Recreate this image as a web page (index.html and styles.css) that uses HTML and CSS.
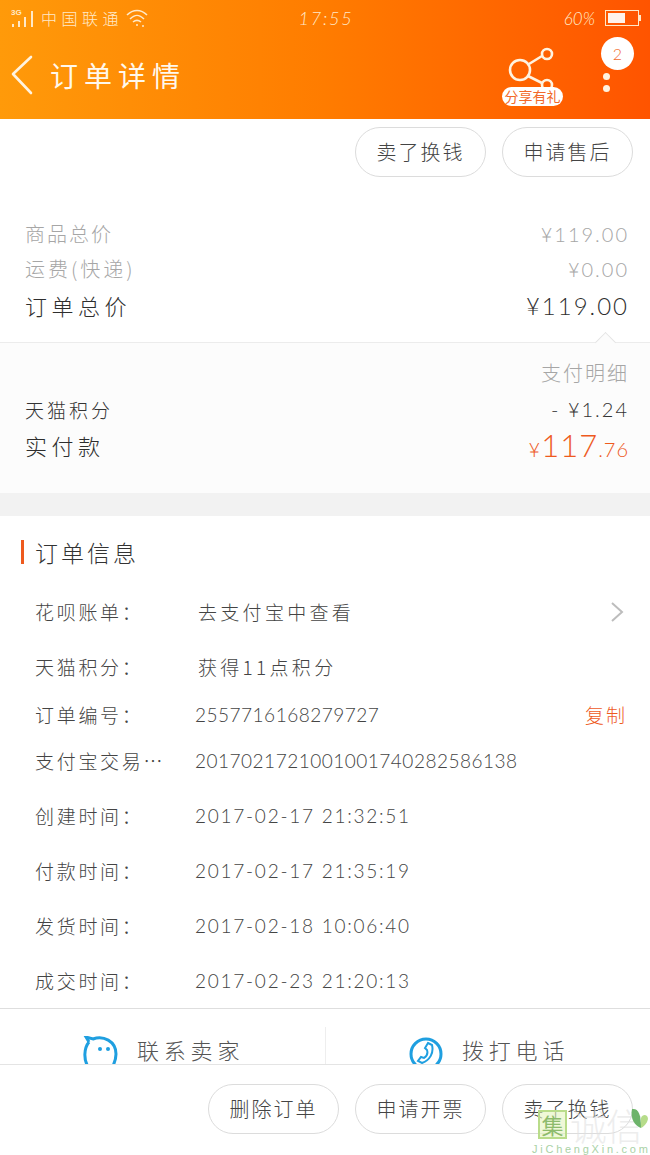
FILE: index.html
```html
<!DOCTYPE html>
<html lang="zh-CN">
<head>
    <meta charset="UTF-8">
    <meta name="viewport" content="width=device-width, initial-scale=1.0">
    <title>订单详情</title>
    <link rel="stylesheet" href="styles.css">
</head>
<body>
<div class="page">
    <!-- top orange area -->
    <header class="top">
        <div class="status">
            <div class="status-left">
                <svg class="signal" width="24" height="20" viewBox="0 0 24 20">
                    <text x="0" y="7" class="net">3G</text>
                    <rect x="1" y="16" width="2" height="3" fill="#ffe9c8"/>
                    <rect x="7" y="13" width="2" height="6" fill="#ffe9c8"/>
                    <rect x="13" y="9" width="2" height="10" fill="#ffe9c8"/>
                    <rect x="20" y="3" width="2" height="16" fill="#ffe9c8"/>
                </svg>
                <span class="carrier">中国联通</span>
                <svg width="24" height="20" viewBox="0 0 24 20" fill="none" stroke="#ffe9c8" stroke-width="1.6">
                    <path d="M2 7 C8 1 16 1 22 7"/>
                    <path d="M5 11 C10 6 14 6 19 11"/>
                    <path d="M8 14 C11 11.5 13 11.5 16 14"/>
                    <circle cx="12" cy="17" r="1" fill="#ffe9c8" stroke="none"/>
                    <circle cx="18" cy="18" r="1" fill="#ffe9c8" stroke="none"/>
                </svg>
            </div>
            <span class="time">17:55</span>
            <div class="status-right">
                <span class="percent">60%</span>
                <div class="battery"><div class="battery-fill" style="width:60%"></div></div>
                <div class="battery-tip"></div>
            </div>
        </div>
        <div class="titlebar">
            <svg class="back" width="24" height="40" viewBox="0 0 24 40" fill="none" stroke="#fff3e0" stroke-width="2.6" stroke-linecap="round" stroke-linejoin="round">
                <path d="M21 2 L3 19 L21 38"/>
            </svg>
            <h1 class="title">订单详情</h1>
            <div class="share">
                <svg width="54" height="48" viewBox="0 0 54 48" fill="none" stroke="#fff3e0" stroke-width="2.6">
                    <circle cx="19" cy="24" r="10"/>
                    <circle cx="46" cy="8" r="5"/>
                    <circle cx="46" cy="39" r="5"/>
                    <path d="M28 18 L41 10"/>
                    <path d="M27 30 L41 37"/>
                </svg>
                <span class="share-tag">分享有礼</span>
            </div>
            <div class="more">
                <span class="badge">2</span>
                <span class="dot"></span>
                <span class="dot"></span>
            </div>
        </div>
    </header>

    <main class="content">
        <div class="actions">
            <a class="pill">卖了换钱</a>
            <a class="pill">申请售后</a>
        </div>

        <!-- prices -->
        <section class="prices">
            <div class="row row-muted"><span>商品总价</span><span class="num">¥119.00</span></div>
            <div class="row row-muted row-wide"><span>运费(快递)</span><span class="num">¥0.00</span></div>
            <div class="row row-total"><span>订单总价</span><span class="num">¥119.00</span></div>
        </section>

        <section class="pay">
            <span class="arrow"></span>
            <div class="pay-detail">支付明细</div>
            <div class="row row-small"><span>天猫积分</span><span class="num">- ¥1.24</span></div>
            <div class="row row-total"><span>实付款</span><span class="num paid">¥<b>117</b>.<small>76</small></span></div>
        </section>

        <div class="band"></div>

        <!-- order info -->
        <section class="info">
            <h2 class="info-title">订单信息</h2>
            <div class="info-row h-first"><span class="label">花呗账单：</span><span class="value value-cn">去支付宝中查看</span>
                <svg class="chevron" width="14" height="22" viewBox="0 0 14 22" fill="none" stroke="#bdbdbd" stroke-width="2"><path d="M2 2 L12 11 L2 20"/></svg>
            </div>
            <div class="info-row h-55"><span class="label">天猫积分：</span><span class="value value-cn">获得11点积分</span></div>
            <div class="info-row h-47"><span class="label">订单编号：</span><span class="value value-code">2557716168279727</span><a class="copy">复制</a></div>
            <div class="info-row h-46"><span class="label">支付宝交易…</span><span class="value value-code">2017021721001001740282586138</span></div>
            <div class="info-row h-55"><span class="label">创建时间：</span><span class="value value-date">2017-02-17 21:32:51</span></div>
            <div class="info-row h-55"><span class="label">付款时间：</span><span class="value value-date">2017-02-17 21:35:19</span></div>
            <div class="info-row h-55"><span class="label">发货时间：</span><span class="value value-date">2017-02-18 10:06:40</span></div>
            <div class="info-row h-55"><span class="label">成交时间：</span><span class="value value-date">2017-02-23 21:20:13</span></div>
        </section>

        <div class="contact">
            <div class="contact-item">
                <svg width="36" height="36" viewBox="0 0 36 36" fill="none" stroke="#1f9fe0" stroke-width="3">
                    <path d="M6 6 L3 1 L10 3 C20 -1 33 5 33 18 C33 24 31 28 29 32"/>
                    <path d="M6 6 C1 12 0 24 6 32"/>
                    <circle cx="17" cy="13" r="2" fill="#1f9fe0" stroke="none"/>
                    <circle cx="25" cy="13" r="2" fill="#1f9fe0" stroke="none"/>
                </svg>
                <span>联系卖家</span>
            </div>
            <div class="contact-item contact-phone">
                <svg width="36" height="36" viewBox="0 0 36 36" fill="none" stroke="#1f9fe0" stroke-width="3">
                    <circle cx="17" cy="18" r="15"/>
                    <path d="M19 7 L23 9 C25 17 21 24 13 27 L9 25 L12 21 L15 22 C18 20 19 17 18 14 L16 12 Z" stroke-width="2"/>
                </svg>
                <span>拨打电话</span>
            </div>
        </div>
    </main>

    <footer class="bottom">
        <a class="pill">删除订单</a>
        <a class="pill">申请开票</a>
        <a class="pill">卖了换钱</a>
    </footer>

    <!-- site watermark over the footer -->
    <div class="watermark">
        <div class="wm-top">
            <span class="wm-box">集</span>
            <span class="wm-name">诚信</span>
            <svg class="wm-leaf" width="20" height="24" viewBox="0 0 20 24"><path d="M3 2 C9 1 12 6 12 21 C6 19 1 12 3 2 Z" fill="#6db36a"/><path d="M12 11 C14 6 19 8 19 12 C18 17 14 20 12 21 Z" fill="#b6dc8a"/></svg>
        </div>
        <div class="wm-url">JiChengXin.com</div>
    </div>
</div>
</body>
</html>
```

FILE: styles.css
```css
* {
    box-sizing: border-box;
}

html, body {
    margin: 0;
    padding: 0;
    overflow: hidden;
}

body {
    font-family: "Noto Sans CJK SC", "Lato", sans-serif;
    font-weight: 300;
    color: #333;
    background: #fff;
}

.page {
    position: relative;
    width: 650px;
    height: 1155px;
    display: flex;
    flex-direction: column;
    overflow: hidden;
}

/* top orange area */
.top {
    height: 119px;
    background: linear-gradient(90deg, #ff9a0a 0%, #ff7c00 50%, #ff5400 100%);
    color: #fff;
}

.status {
    height: 32px;
    padding: 4px 9px 0 11px;
    display: grid;
    grid-template-columns: 1fr auto 1fr;
    align-items: center;
    color: #ffe9c8;
}

.status-left {
    display: flex;
    align-items: center;
    gap: 6px;
}

.net {
    font-family: "Liberation Sans", sans-serif;
    font-size: 8px;
    font-weight: 700;
    fill: #ffe9c8;
}

.carrier {
    font-size: 16px;
    letter-spacing: 4.5px;
    margin-right: -4px;
}

.time {
    font-family: "Lato", sans-serif;
    font-size: 18px;
    font-style: italic;
    letter-spacing: 1.8px;
}

.status-right {
    display: flex;
    align-items: center;
    justify-content: flex-end;
}

.percent {
    font-family: "Lato", sans-serif;
    font-size: 17px;
    font-style: italic;
    margin-right: 10px;
}

.battery {
    width: 34px;
    height: 16px;
    padding: 2px;
    border: 1px solid #ffe9c8;
}

.battery-fill {
    height: 100%;
    background: #fff3ea;
}

.battery-tip {
    width: 2px;
    height: 6px;
    background: #ffe9c8;
}

.titlebar {
    height: 87px;
    padding: 0 16px 0 10px;
    display: flex;
    align-items: flex-start;
}

.back {
    margin-top: 23px;
}

.title {
    margin: 23px 0 0 16px;
    font-size: 28px;
    font-weight: 400;
    line-height: 40px;
    letter-spacing: 6px;
    color: #fff8ec;
    flex: 1;
}

.share {
    position: relative;
    width: 62px;
    height: 60px;
    margin: 14px 37px 0 0;
    display: flex;
    justify-content: flex-start;
}

.share svg {
    margin-left: -1px;
}

.share-tag {
    position: absolute;
    left: 0;
    top: 41px;
    width: 61px;
    height: 19px;
    border-radius: 10px;
    background: #fff;
    color: #f2692a;
    font-size: 14px;
    font-weight: 400;
    line-height: 19px;
    text-align: center;
    white-space: nowrap;
}

.more {
    width: 33px;
    display: flex;
    flex-direction: column;
    align-items: flex-start;
    margin-top: 5px;
}

.badge {
    width: 33px;
    height: 33px;
    border-radius: 50%;
    background: #fff;
    color: #f2692a;
    font-family: "Lato", sans-serif;
    font-size: 16px;
    line-height: 33px;
    text-align: center;
    margin-bottom: -2px;
}

.dot {
    width: 7px;
    height: 7px;
    margin-left: 2px;
    border-radius: 50%;
    background: #fff3e0;
    margin-top: 5px;
}

/* content */
.content {
    flex: 1;
    min-height: 0;
    display: flex;
    flex-direction: column;
}

.actions {
    height: 66px;
    padding: 8px 17px 0 0;
    display: flex;
    justify-content: flex-end;
    gap: 16px;
}

.pill {
    width: 131px;
    height: 50px;
    border: 1px solid #dcdcdc;
    border-radius: 25px;
    font-size: 20px;
    line-height: 48px;
    letter-spacing: 2px;
    text-align: center;
    color: #444;
    background: transparent;
}

.row {
    display: flex;
    justify-content: space-between;
    align-items: center;
    padding: 0 21px 0 25px;
}

.num {
    font-family: "Lato", sans-serif;
    letter-spacing: 2px;
}

.prices {
    padding-top: 31px;
    height: 157px;
}

.row-muted {
    height: 35px;
    color: #a6a6a6;
    font-size: 20px;
    letter-spacing: 2px;
}

.row-wide {
    letter-spacing: 3px;
}

.row-total {
    height: 38px;
    color: #2e2e2e;
    font-size: 22px;
    letter-spacing: 4.5px;
}

.row-total .num {
    font-size: 24px;
}

.pay {
    position: relative;
    height: 151px;
    background: #fcfcfc;
    border-top: 1px solid #ececec;
    padding-top: 14px;
}

.arrow {
    position: absolute;
    right: 37px;
    top: -8px;
    width: 15px;
    height: 15px;
    background: #fcfcfc;
    border-top: 1px solid #e4e4e4;
    border-left: 1px solid #e4e4e4;
    transform: rotate(45deg);
}

.pay-detail {
    height: 32px;
    padding-right: 21px;
    text-align: right;
    font-size: 20px;
    line-height: 32px;
    letter-spacing: 2px;
    color: #a6a6a6;
}

.row-small {
    height: 40px;
    font-size: 19px;
    letter-spacing: 3px;
    color: #333;
}

.row-small .num {
    font-size: 20px;
    letter-spacing: 2px;
}

.pay .row-total {
    height: 36px;
    margin-top: -2px;
}

.row-total .paid {
    color: #ee5a1e;
    font-size: 20px;
    letter-spacing: 1px;
}

.paid b {
    font-size: 31px;
    font-weight: 300;
}

.paid small {
    font-size: 20px;
}

.band {
    height: 23px;
    background: #f2f2f2;
}

/* order info */
.info {
    height: 492px;
    padding-top: 24px;
}

.info-title {
    margin: 0 0 0 21px;
    height: 24px;
    padding-left: 11px;
    border-left: 3px solid #ee5a1e;
    font-size: 23px;
    font-weight: 300;
    line-height: 24px;
    letter-spacing: 3px;
    color: #333;
}

.info-row {
    display: flex;
    align-items: center;
    padding: 0 25px 0 35px;
    font-size: 19px;
    color: #444;
}

.h-first {
    height: 55px;
    margin-top: 20px;
}

.h-55 {
    height: 55px;
}

.h-47 {
    height: 38px;
    margin-top: 1px;
}

.h-46 {
    height: 46px;
    margin: 4px 0 5px;
}

.label {
    width: 160px;
    flex: none;
    font-size: 19px;
    letter-spacing: 2.7px;
    white-space: nowrap;
}

.value {
    flex: 1;
    font-family: "Lato", sans-serif;
    font-size: 19px;
    white-space: nowrap;
}

.value-code {
    letter-spacing: 0.5px;
}

.value-date {
    letter-spacing: 1.75px;
}

.value-cn {
    font-family: "Noto Sans CJK SC", sans-serif;
    padding-left: 3px;
    letter-spacing: 3.3px;
}

.copy {
    color: #ee5a1e;
    font-size: 19px;
    letter-spacing: 2px;
    margin-right: -2px;
}

.chevron {
    margin-right: 1px;
}

/* contact row, cut off by the footer */
.contact {
    height: 56px;
    border-top: 1px solid #dedede;
    display: flex;
    overflow: hidden;
}

.contact-item {
    width: 50%;
    padding: 27px 0 0 83px;
    display: flex;
    align-items: flex-start;
    gap: 18px;
    font-size: 22px;
    letter-spacing: 4.8px;
    color: #555;
}

.contact-item svg {
    flex: none;
}

.contact-item span {
    line-height: 24px;
    margin-top: 1px;
}

.contact-phone {
    border-left: 1px solid #eee;
    margin-top: 18px;
    padding-top: 9px;
    gap: 17px;
}

.bottom {
    height: 91px;
    border-top: 1px solid #e4e4e4;
    padding: 19px 17px 0 0;
    display: flex;
    justify-content: flex-end;
    gap: 16px;
    background: #fff;
}

/* watermark */
.watermark {
    position: absolute;
    right: 0;
    bottom: 0;
    width: 118px;
    height: 45px;
}

.wm-top {
    display: flex;
    align-items: flex-start;
    padding-left: 6px;
}

.wm-box {
    width: 29px;
    height: 29px;
    background: rgba(228, 243, 190, 0.6);
    border: 2px solid #b9dc8a;
    color: #8dbb6c;
    font-size: 22px;
    font-weight: 400;
    line-height: 24px;
    text-align: center;
}

.wm-name {
    font-size: 37px;
    line-height: 30px;
    color: rgba(225, 225, 225, 0.6);
    margin-left: 3px;
    letter-spacing: -1px;
    white-space: nowrap;
}

.wm-leaf {
    position: absolute;
    right: 1px;
    top: -3px;
}

.wm-url {
    font-family: "Liberation Sans", sans-serif;
    font-size: 11px;
    letter-spacing: 2.75px;
    color: #a9d2a6;
    margin-top: 3px;
    white-space: nowrap;
}
```
